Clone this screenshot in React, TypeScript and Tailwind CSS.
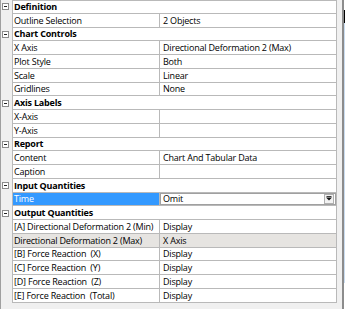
type Row = { name: string; value: string; kind?: "select" | "muted" };
type Section = { title: string; rows: Row[] };

const sections: Section[] = [
  { title: "Definition", rows: [{ name: "Outline Selection", value: "2 Objects" }] },
  {
    title: "Chart Controls",
    rows: [
      { name: "X Axis", value: "Directional Deformation 2 (Max)" },
      { name: "Plot Style", value: "Both" },
      { name: "Scale", value: "Linear" },
      { name: "Gridlines", value: "None" },
    ],
  },
  {
    title: "Axis Labels",
    rows: [
      { name: "X-Axis", value: "" },
      { name: "Y-Axis", value: "" },
    ],
  },
  {
    title: "Report",
    rows: [
      { name: "Content", value: "Chart And Tabular Data" },
      { name: "Caption", value: "" },
    ],
  },
  { title: "Input Quantities", rows: [{ name: "Time", value: "Omit", kind: "select" }] },
  {
    title: "Output Quantities",
    rows: [
      { name: "[A] Directional Deformation 2 (Min)", value: "Display" },
      { name: "Directional Deformation 2 (Max)", value: "X Axis", kind: "muted" },
      { name: "[B] Force Reaction  (X)", value: "Display" },
      { name: "[C] Force Reaction  (Y)", value: "Display" },
      { name: "[D] Force Reaction  (Z)", value: "Display" },
      { name: "[E] Force Reaction  (Total)", value: "Display" },
    ],
  },
];

function MinusBox() {
  return (
    <div className="ml-[1px] w-[7px] h-[7px] border border-[#8c8c8c] bg-white flex items-center justify-center">
      <div className="w-[3px] h-[1px] bg-[#222]" />
    </div>
  );
}

function HeaderRow({ title, first }: { title: string; first: boolean }) {
  return (
    <div className="flex h-[13.75px]">
      <div className="w-[11px] shrink-0 flex items-center">
        <MinusBox />
      </div>
      <div
        className={`w-[325px] border-l border-r border-b border-[#b9b9b9] bg-white pl-[1px] flex items-center font-bold whitespace-pre ${first ? "border-t" : ""}`}
      >
        {title}
      </div>
    </div>
  );
}

function DataRow({ row }: { row: Row }) {
  const selected = row.kind === "select";
  const muted = row.kind === "muted";
  return (
    <div className="flex h-[13.75px]">
      <div className="w-[11px] shrink-0" />
      <div
        className={`w-[147px] shrink-0 border-l border-b border-[#b9b9b9] pl-[1px] flex items-center whitespace-pre overflow-hidden ${
          selected ? "bg-[#3399ff] text-white" : muted ? "bg-[#e6e4e1]" : "bg-white"
        }`}
      >
        {row.name}
      </div>
      {selected ? (
        <div className="w-[178px] shrink-0 border-l border-r border-b border-[#b9b9b9] bg-white flex">
          <div className="flex-1 border border-[#a0a0a0] flex items-center pl-[2px] pr-[1px]">
            <span className="flex-1">{row.value}</span>
            <div className="w-[10px] h-[10px] border border-[#b0b0b0] bg-[#f2f2f2] flex items-center justify-center">
              <svg width="6" height="5" viewBox="0 0 6 5">
                <path d="M0 1.5 H6 L3 4.5 Z" fill="#111" />
                <rect x="0.5" y="0" width="5" height="0.8" fill="#111" />
              </svg>
            </div>
          </div>
        </div>
      ) : (
        <div
          className={`w-[178px] shrink-0 border-l border-r border-b border-[#b9b9b9] pl-[3px] flex items-center whitespace-pre overflow-hidden ${
            muted ? "bg-[#e6e4e1]" : "bg-white"
          }`}
        >
          {row.value}
        </div>
      )}
    </div>
  );
}

export default function App() {
  return (
    <div
      className="w-[345px] h-[309px] bg-[#f0f0f0] overflow-hidden flex text-[9px] text-black leading-none tracking-[-0.2px]"
      style={{ fontFamily: '"Open Sans", "Liberation Sans", sans-serif' }}
    >
      <div className="w-[1px] shrink-0 bg-[#a0a0a0]" />
      <div className="w-[336px] shrink-0 flex flex-col">
        {sections.map((s, i) => (
          <div key={s.title} className="flex flex-col">
            <HeaderRow title={s.title} first={i === 0} />
            {s.rows.map((r) => (
              <DataRow key={r.name} row={r} />
            ))}
          </div>
        ))}
      </div>
      <div className="w-[5px] shrink-0" />
      <div className="w-[2px] shrink-0 bg-[#8c8c8c]" />
      <div className="w-[1px] shrink-0 flex flex-col">
        <div className="h-[10px] bg-white" />
        <div className="h-[13px] bg-black" />
        <div className="h-[260px] bg-[#c9dcf0]" />
        <div className="flex-1 bg-white" />
      </div>
    </div>
  );
}
